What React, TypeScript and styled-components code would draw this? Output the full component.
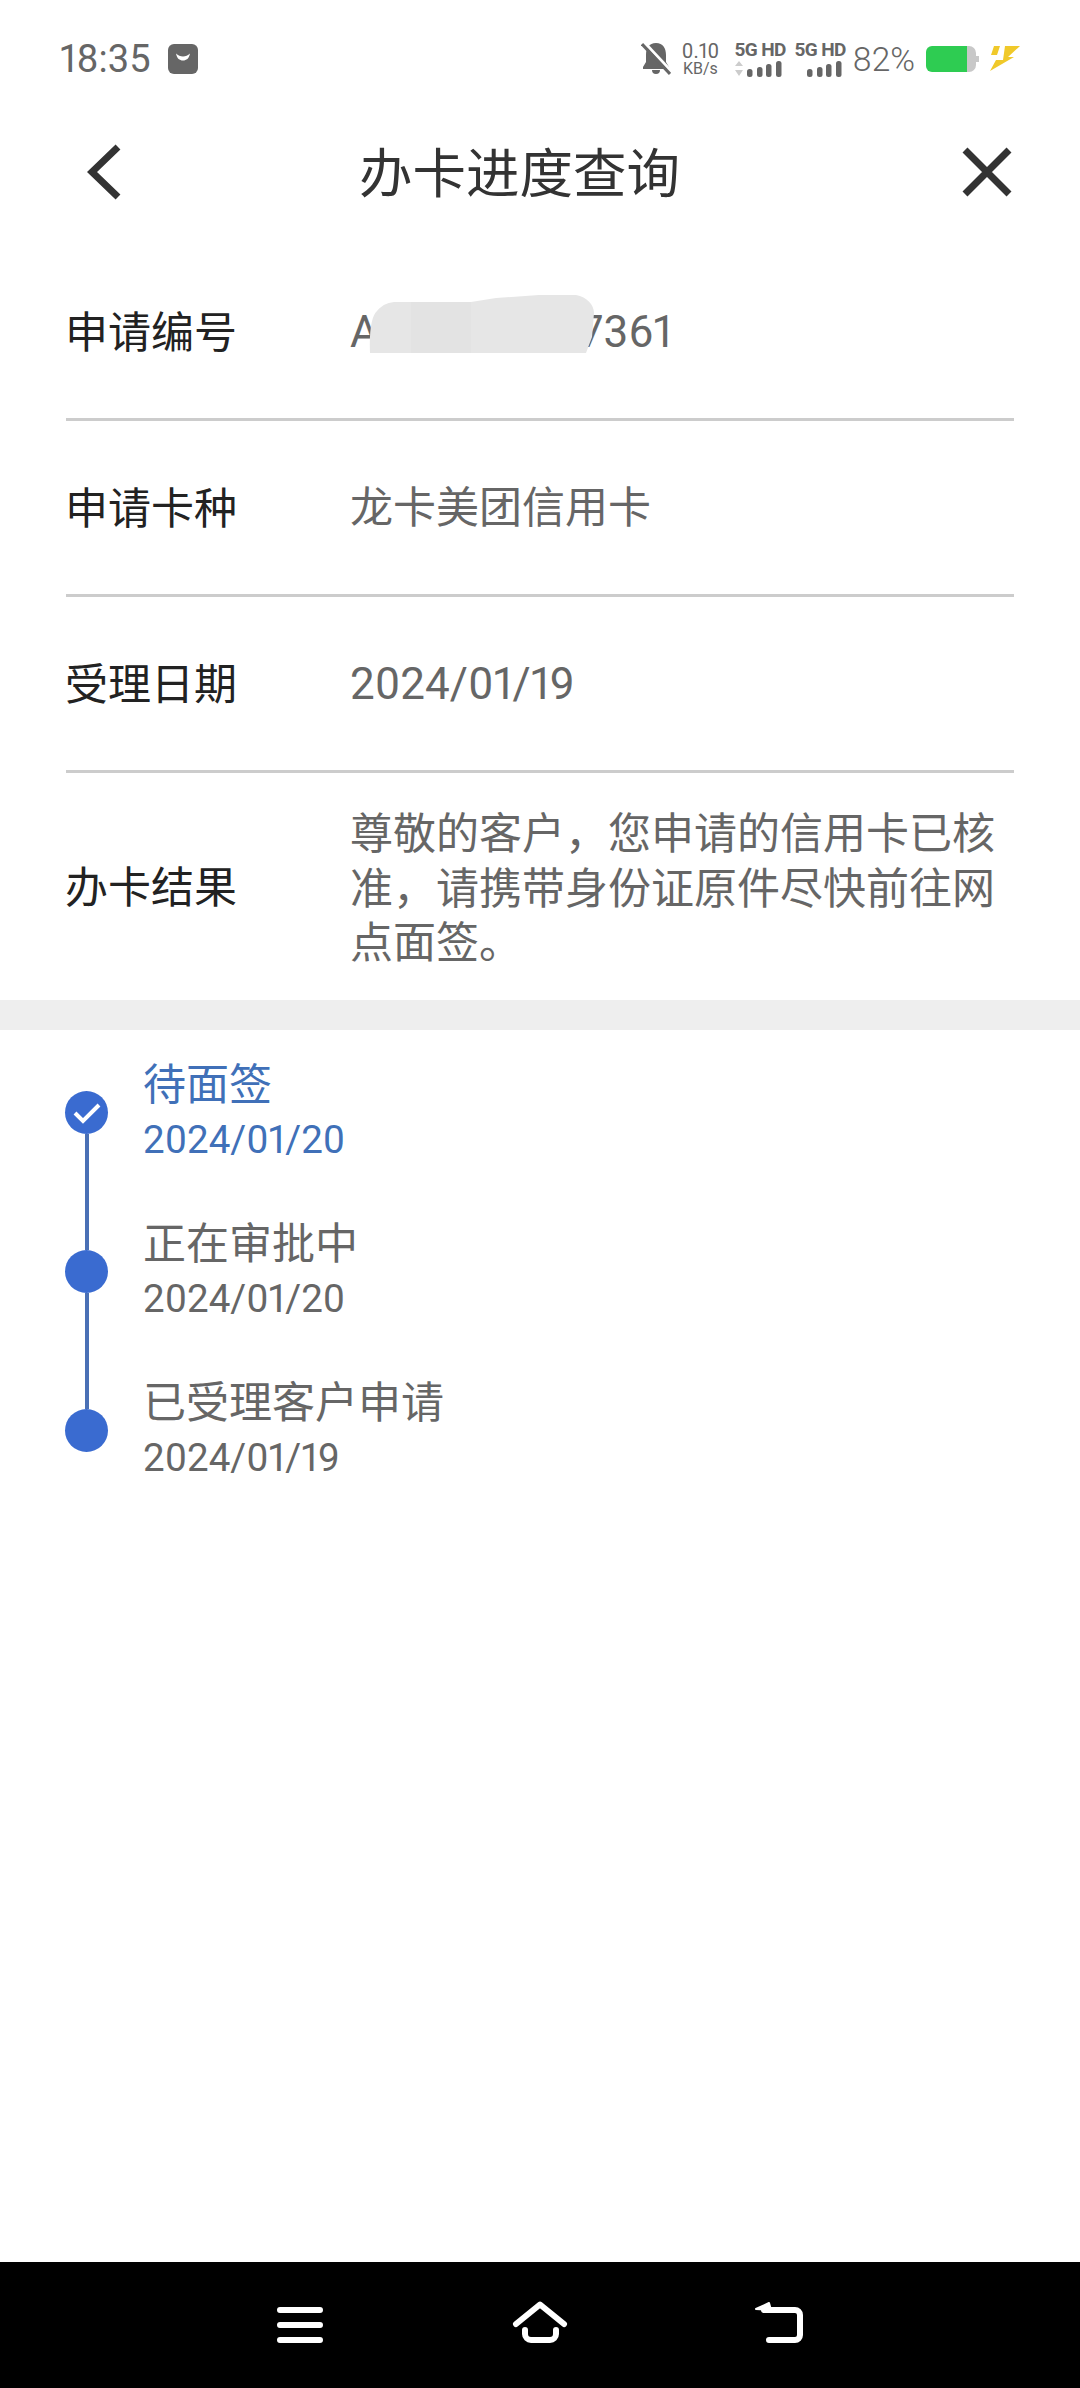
import React from 'react'
import styled, { createGlobalStyle } from 'styled-components'

const GlobalStyle = createGlobalStyle`
  html, body {
    margin: 0;
    padding: 0;
    background: #fff;
  }
  * {
    box-sizing: border-box;
  }
`

const rows = [
  { label: '申请卡种', value: '龙卡美团信用卡', numeric: false },
  { label: '受理日期', value: '2024/01/19', numeric: true },
]

const steps = [
  { id: 1, title: '待面签', date: '2024/01/20', active: true },
  { id: 2, title: '正在审批中', date: '2024/01/20', active: false },
  { id: 3, title: '已受理客户申请', date: '2024/01/19', active: false },
]

const SignalCell: React.FC<{ arrows?: boolean }> = ({ arrows }) => (
  <Signal>
    <NetworkName>5G HD</NetworkName>
    <svg width="48" height="18" viewBox="0 0 48 18">
      {arrows && <path d="M5 1l4 5H1zM1 10h8l-4 6z" fill="#ccc" />}
      <rect x="13" y="9" width="5.500" height="8" rx="2.500" fill="#666" />
      <rect x="23" y="7" width="5.500" height="10" rx="2.500" fill="#666" />
      <rect x="32" y="4" width="5.500" height="13" rx="2.500" fill="#666" />
      <rect x="42" y="1" width="5.500" height="16" rx="2.500" fill="#666" />
    </svg>
  </Signal>
)

const App: React.FC = () => {
  return (
    <Page>
      <GlobalStyle />
      <StatusBar>
        <Time>18:35</Time>
        <svg width="30" height="30" viewBox="0 0 30 30">
          <rect width="30" height="30" rx="6" fill="#666" />
          <path d="M8 9.500c1 5 3.500 7 7 7s6-2 7-7c-2 2-4.500 3-7 3s-5-1-7-3z" fill="#fff" />
        </svg>
        <StatusRight>
          <svg width="30" height="34" viewBox="0 0 30 34">
            <path d="M15 1C8 1 5 6 5 13v7l-3 5v2h26v-2l-3-5v-7C25 6 22 1 15 1zM11 28a4 4 0 0 0 8 0z" fill="#666" />
            <path d="M2 -1L30 29" stroke="#fff" strokeWidth="3" />
            <path d="M1 2L29 32" stroke="#666" strokeWidth="3" />
          </svg>
          <Speed>
            <SpeedValue>0.10</SpeedValue>
            <SpeedUnit>KB/s</SpeedUnit>
          </Speed>
          <SignalCell arrows />
          <SignalCell />
          <Percent>82%</Percent>
          <svg width="53" height="26" viewBox="0 0 53 26">
            <path d="M40 0h3a7 7 0 0 1 7 7v3h3v6h-3v3a7 7 0 0 1-7 7h-3z" fill="#c8c8c8" />
            <path d="M6 0h35v26H6a6 6 0 0 1-6-6V6a6 6 0 0 1 6-6z" fill="#2ecc52" />
          </svg>
          <svg width="30" height="26" viewBox="0 0 30 26">
            <path d="M4 0h6L7 9H1zM15 0h15L18 11h6L0 25l6-11h7z" fill="#f0c92a" />
          </svg>
        </StatusRight>
      </StatusBar>

      <NavBar>
        <svg width="36" height="56" viewBox="0 0 36 56">
          <path d="M31 3L5 28l26 25" fill="none" stroke="#333" strokeWidth="7" />
        </svg>
        <NavTitle>办卡进度查询</NavTitle>
        <CloseIcon width="52" height="52" viewBox="0 0 52 52">
          <path d="M4 4l44 44M48 4L4 48" fill="none" stroke="#333" strokeWidth="7" />
        </CloseIcon>
      </NavBar>

      <InfoList>
        <InfoRow>
          <Label>申请编号</Label>
          <Value $numeric>
            A<HiddenGap />7361
            <Smudge width="225" height="59" viewBox="0 0 225 59">
              <path
                d="M1 58C0 35 3 20 8 16c6-7 12-9 20-9h74l25-4 43-3h37c11 2 18 10 18 18l-2 24-6 16z"
                fill="#e6e6e6"
              />
              <rect x="42" y="7" width="60" height="51" fill="#e3e3e3" />
            </Smudge>
          </Value>
        </InfoRow>
        {rows.map((row) => (
          <InfoRow key={row.label}>
            <Label>{row.label}</Label>
            <Value $numeric={row.numeric}>{row.value}</Value>
          </InfoRow>
        ))}
        <ResultRow>
          <Label>办卡结果</Label>
          <ResultText>尊敬的客户，您申请的信用卡已核准，请携带身份证原件尽快前往网点面签。</ResultText>
        </ResultRow>
      </InfoList>

      <Band />

      <Timeline>
        {steps.map((step, index) => (
          <Step key={step.id}>
            <Marker>
              <Dot>
                {step.active && (
                  <svg width="30" height="22" viewBox="0 0 30 22">
                    <path d="M3 11l8 8L27 3" fill="none" stroke="#fff" strokeWidth="4" />
                  </svg>
                )}
              </Dot>
              {index < steps.length - 1 && <Rail />}
            </Marker>
            <StepText>
              <StepTitle $active={step.active}>{step.title}</StepTitle>
              <StepDate $active={step.active}>{step.date}</StepDate>
            </StepText>
          </Step>
        ))}
      </Timeline>

      <SystemBar>
        <svg width="52" height="50" viewBox="0 0 52 50">
          <path d="M6 10h40M6 25h40M6 40h40" stroke="#fff" strokeWidth="6" strokeLinecap="round" />
        </svg>
        <svg width="60" height="50" viewBox="0 0 60 50">
          <path d="M6 24L30 4.500 54 24" fill="none" stroke="#fff" strokeWidth="6" strokeLinecap="round" strokeLinejoin="round" />
          <path d="M15 30v4a6 6 0 0 0 6 6h19a6 6 0 0 0 6-6v-4" fill="none" stroke="#fff" strokeWidth="6" strokeLinecap="round" />
        </svg>
        <svg width="50" height="50" viewBox="0 0 50 50">
          <path d="M2 9L15 3l2 7z" fill="#fff" stroke="#fff" strokeWidth="2" strokeLinejoin="round" />
          <path d="M10 10h31a5 5 0 0 1 5 5v20a5 5 0 0 1-5 5H15" fill="none" stroke="#fff" strokeWidth="6" strokeLinecap="round" />
        </svg>
      </SystemBar>
    </Page>
  )
}

export default App

const Page = styled.div`
  width: 1080px;
  height: 2388px;
  display: flex;
  flex-direction: column;
  background: #fff;
  font-family: Roboto, 'Noto Sans CJK SC', sans-serif;
  font-variant-numeric: proportional-nums;
  overflow: hidden;
`

const StatusBar = styled.div`
  height: 118px;
  display: flex;
  align-items: center;
  padding: 0 60px;
  color: #666;
`

const Time = styled.span`
  font-size: 38px;
  margin-right: 17px;
`

const StatusRight = styled.div`
  display: flex;
  align-items: center;
  gap: 11px;
  margin-left: auto;
`

const Speed = styled.div`
  width: 36px;
  display: flex;
  flex-direction: column;
  align-items: center;
  margin-right: 5px;
`

const SpeedValue = styled.span`
  font-size: 20px;
  line-height: 19px;
`

const SpeedUnit = styled.span`
  font-size: 16px;
  line-height: 15px;
`

const Signal = styled.div`
  width: 49px;
  display: flex;
  flex-direction: column;
  gap: 1px;
`

const NetworkName = styled.span`
  font-size: 19px;
  line-height: 18px;
  font-weight: 700;
  letter-spacing: -0.6px;
  white-space: pre;
`

const Percent = styled.span`
  margin-left: -2px;
  font-size: 33.5px;
  font-weight: 300;
`

const NavBar = styled.div`
  height: 108px;
  display: flex;
  align-items: center;
  padding: 0 67px 0 87px;
`

const NavTitle = styled.h1`
  margin: 0 0 6px 236px;
  font-size: 53.5px;
  font-weight: 400;
  color: #333;
`

const CloseIcon = styled.svg`
  margin-left: auto;
`

const InfoList = styled.div`
  padding: 19px 66px 0;
`

const InfoRow = styled.div`
  height: 176px;
  display: flex;
  align-items: center;
  border-bottom: 3px solid #ccc;
`

const ResultRow = styled.div`
  height: 227px;
  display: flex;
  align-items: center;
`

const Label = styled.div`
  width: 284px;
  flex-shrink: 0;
  margin: 0 0 5px -1px;
  font-size: 43px;
  color: #222;
`

const Value = styled.div<{ $numeric?: boolean }>`
  position: relative;
  margin-left: 1px;
  font-size: ${(props) => (props.$numeric ? '44px' : '43px')};
  line-height: 60px;
  color: #666;
`

const HiddenGap = styled.span`
  display: inline-block;
  width: 202px;
`

const Smudge = styled.svg`
  position: absolute;
  left: 19px;
  top: -7px;
`

const ResultText = styled.div`
  width: 660px;
  margin: 5px 0 0 1px;
  font-size: 43px;
  line-height: 54.5px;
  color: #666;
`

const Band = styled.div`
  height: 30px;
  flex-shrink: 0;
  background: #eee;
`

const Timeline = styled.div`
  flex: 1;
  padding: 61px 66px 0 65px;
`

const Step = styled.div`
  height: 159px;
  display: flex;
`

const Marker = styled.div`
  width: 43px;
  margin-right: 35px;
  display: flex;
  flex-direction: column;
  align-items: center;
`

const Dot = styled.div`
  width: 43px;
  height: 43px;
  flex-shrink: 0;
  display: flex;
  align-items: center;
  justify-content: center;
  border-radius: 50%;
  background: #3a6bd0;
`

const Rail = styled.div`
  flex: 1;
  width: 4px;
  background: #4a70b5;
`

const StepText = styled.div`
  margin-top: -34px;
`

const StepTitle = styled.div<{ $active: boolean }>`
  font-size: 43px;
  line-height: 56px;
  color: ${(props) => (props.$active ? '#4070b8' : '#666')};
`

const StepDate = styled.div<{ $active: boolean }>`
  font-size: 38.5px;
  line-height: 54px;
  color: ${(props) => (props.$active ? '#4070b8' : '#666')};
`

const SystemBar = styled.div`
  height: 126px;
  flex-shrink: 0;
  display: flex;
  gap: 184px;
  padding: 38px 0 0 274px;
  background: #000;
`
